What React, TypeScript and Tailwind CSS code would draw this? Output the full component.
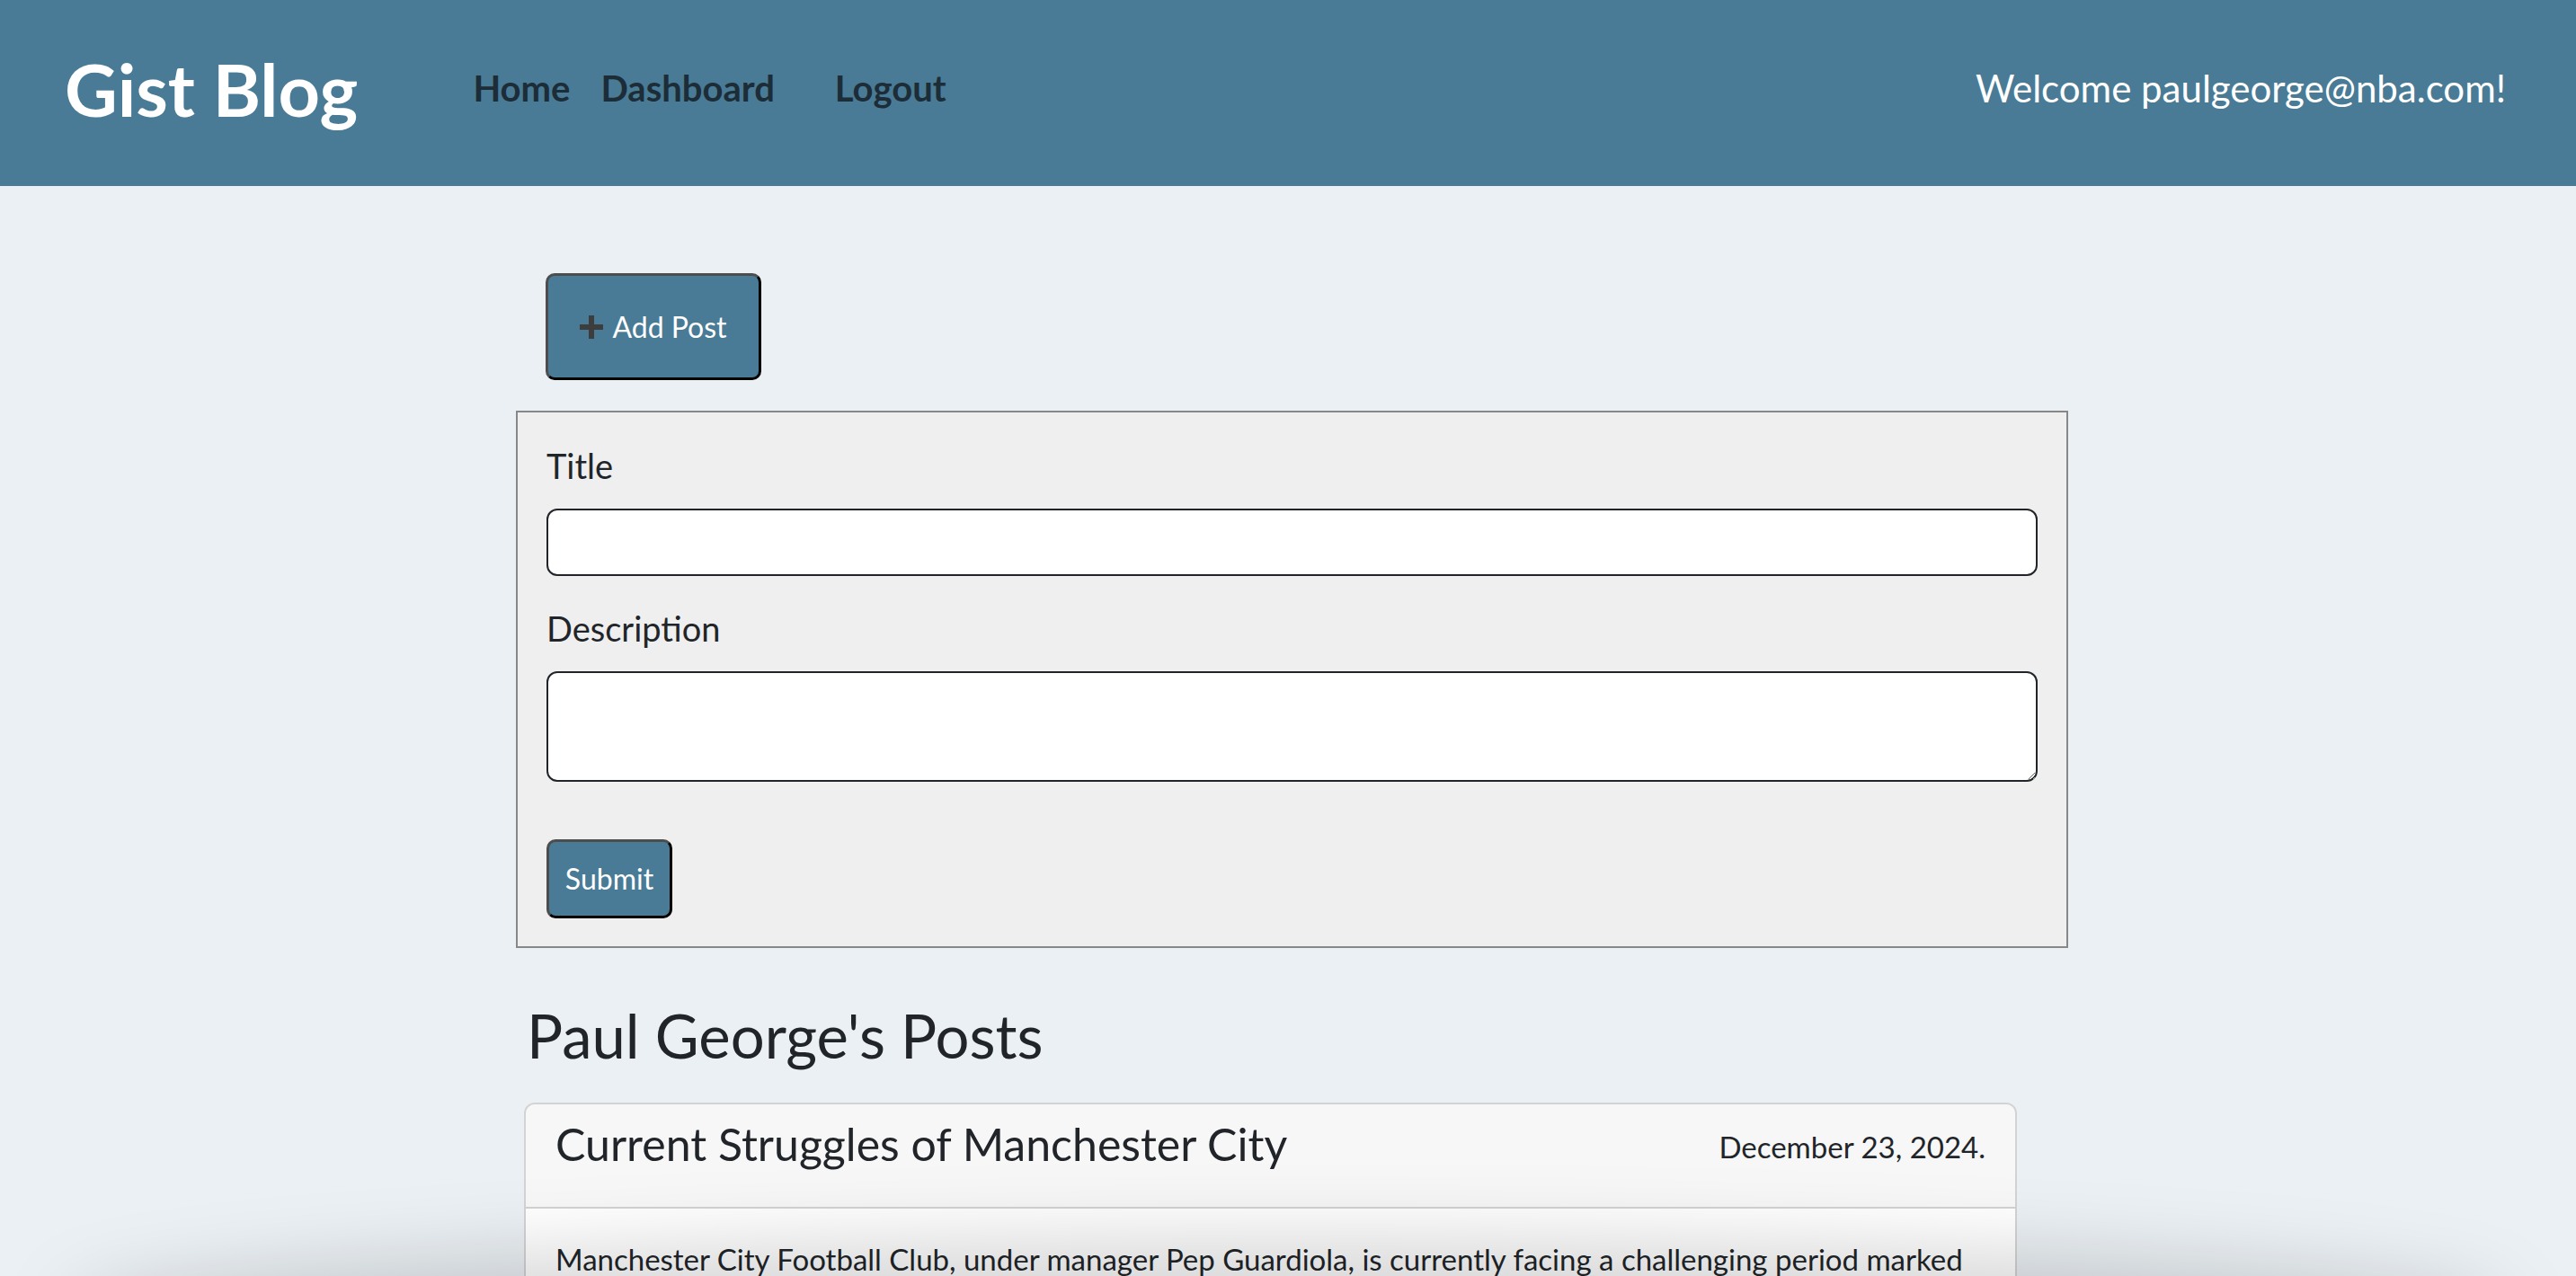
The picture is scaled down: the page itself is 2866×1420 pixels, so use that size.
import React from "react";

const FONT = { fontFamily: "Lato, 'Open Sans', sans-serif" };

function PlusIcon() {
  return (
    <svg width="26" height="26" viewBox="0 0 26 26" className="shrink-0">
      <rect x="10" y="0" width="6" height="26" fill="#3d3d3d" />
      <rect x="0" y="10" width="26" height="6" fill="#3d3d3d" />
    </svg>
  );
}

export default function App() {
  return (
    <div
      className="relative h-[1420px] overflow-hidden bg-[#ebf0f4] text-[#212529]"
      style={FONT}
    >
      <header className="flex h-[207px] items-center bg-[#497b96] pb-[11px] pl-[72px] pr-[78px]">
        <div className="text-[81px] font-bold leading-none text-white">Gist Blog</div>
        <nav className="ml-[128px] flex items-center text-[40px] font-bold text-[#1c2d38]">
          <a href="#">Home</a>
          <a href="#" className="ml-[34px]">Dashboard</a>
          <a href="#" className="ml-[67px]">Logout</a>
        </nav>
        <div className="ml-auto text-[42px] text-white">Welcome paulgeorge@nba.com!</div>
      </header>

      <main className="ml-[574px] flex w-[1727px] flex-col items-start pt-[97px]">
        <button className="ml-[33px] flex h-[119px] w-[240px] items-center justify-center gap-[10px] rounded-[10px] border-[3px] border-t-[#4d4d4d] border-l-[#4d4d4d] border-b-black border-r-black bg-[#497b96] text-[32px] text-white">
          <PlusIcon />
          <span>Add Post</span>
        </button>

        <form className="mt-[34px] w-full border-2 border-[#888888] bg-[#efefef] px-[32px] pt-[32px] pb-[31px]">
          <label className="mb-[21px] block text-[38px] leading-[54px]">Title</label>
          <input className="block h-[75px] w-full rounded-[12px] border-2 border-[#212529] bg-white" />
          <label className="mt-[31px] mb-[21px] block text-[38px] leading-[54px]">Description</label>
          <textarea className="block h-[123px] w-full resize-y rounded-[12px] border-2 border-[#212529] bg-white" />
          <button
            type="button"
            className="mt-[64px] flex h-[88px] w-[140px] items-center justify-center rounded-[10px] border-[3px] border-t-[#4d4d4d] border-l-[#4d4d4d] border-b-black border-r-black bg-[#497b96] text-[32px] text-white"
          >
            Submit
          </button>
        </form>

        <h2 className="ml-[12px] mt-[57px] text-[67px] font-normal leading-[1.2]">Paul George's Posts</h2>

        <div className="ml-[9px] mt-[35px] w-[1661px] overflow-hidden rounded-[12px] border-2 border-[#d3d3d3]">
          <div className="flex items-start justify-between border-b-2 border-[#d3d3d3] bg-[#f7f7f7] px-[33px] pt-[14px] pb-[24px]">
            <h4 className="mb-[16px] text-[50px] font-normal leading-[1.2]">Current Struggles of Manchester City</h4>
            <span className="pt-[14px] text-[33px] leading-[1.2]">December 23, 2024.</span>
          </div>
          <div className="bg-white px-[33px] py-[32px] text-[33px] leading-[1.5]">
            <p className="whitespace-nowrap">
              Manchester City Football Club, under manager Pep Guardiola, is currently facing a challenging period marked
              <br />
              by a string of disappointing results, injuries to key players and growing questions about the squad.
            </p>
          </div>
        </div>
      </main>

      <div className="pointer-events-none absolute -bottom-[125px] left-[70px] right-[70px] h-[170px] rounded-[50%] bg-black/15 blur-[40px]" />
    </div>
  );
}
